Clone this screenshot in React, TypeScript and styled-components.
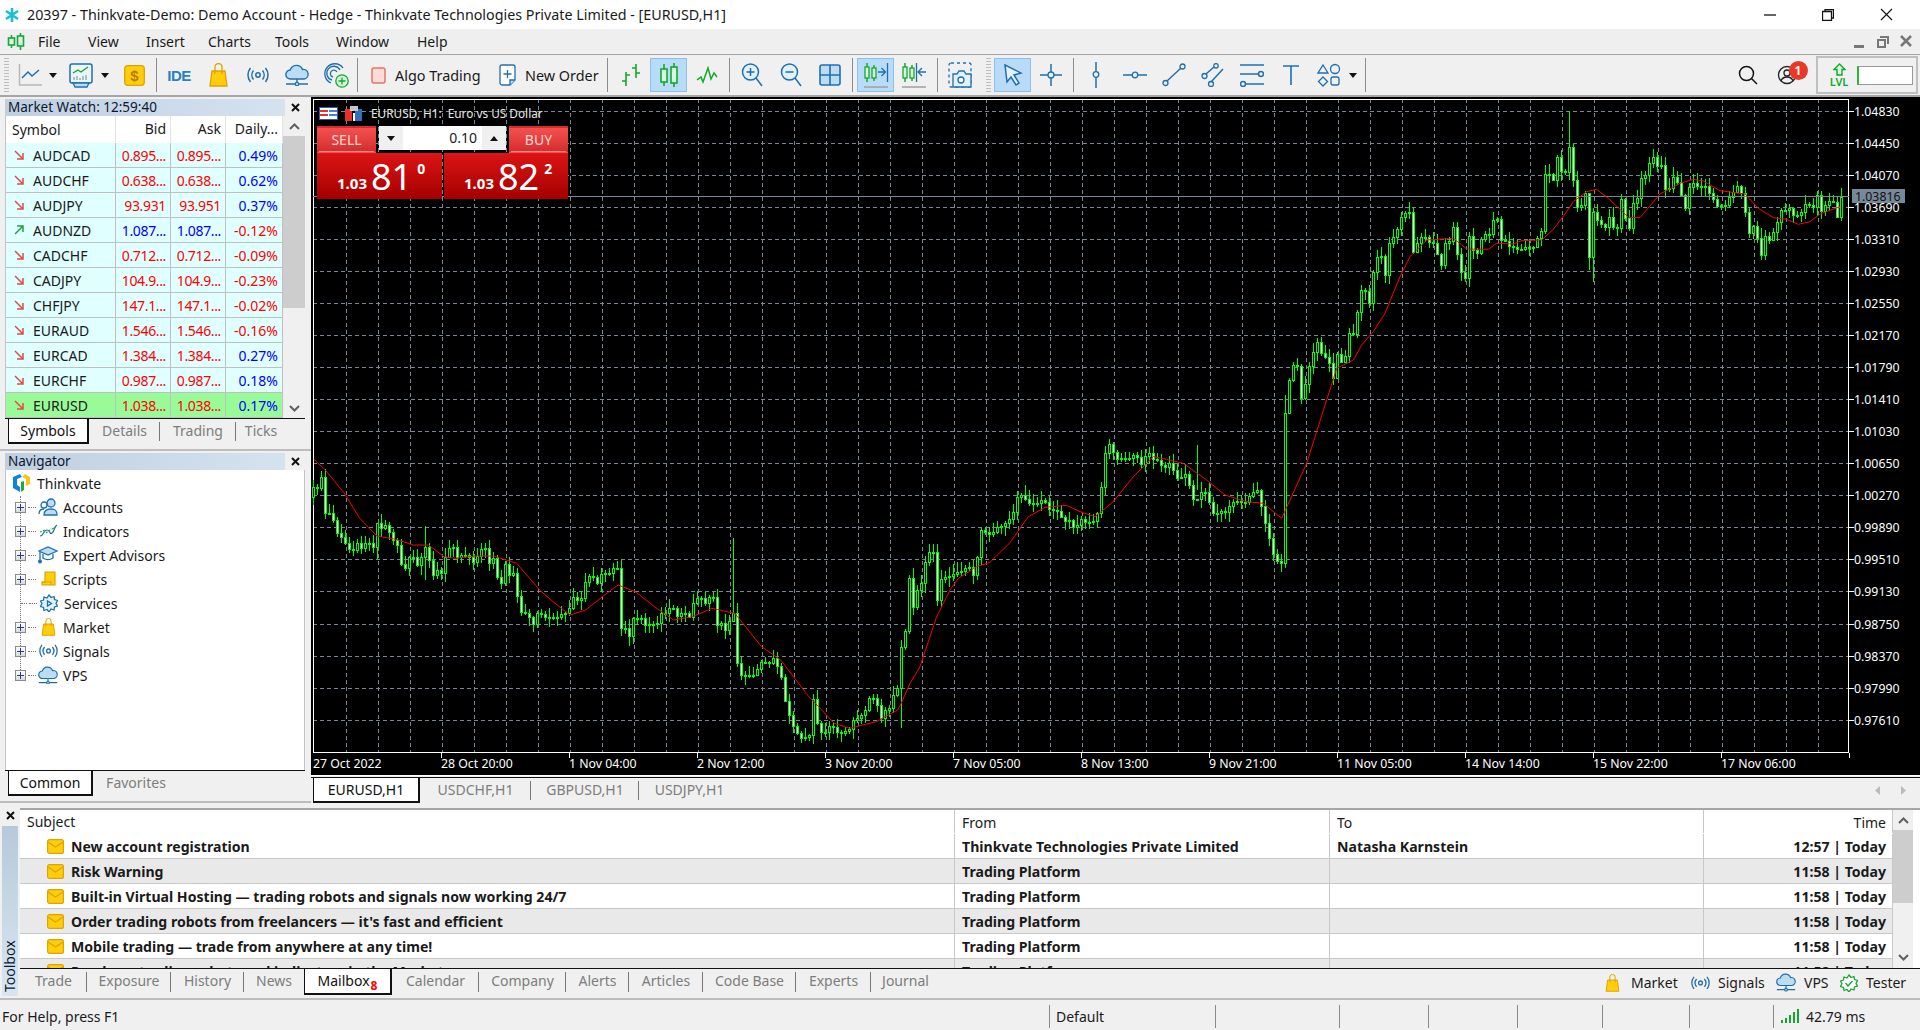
import React from 'react';
import styled, { createGlobalStyle } from 'styled-components';

const BLUE = '#1f6fae';
const LIGHT = '#bcdcf3';
const GREEN = '#12a82e';
const YELLOW = '#ffcd0a';
const AMBER = '#dca400';

const GlobalStyle = createGlobalStyle`
  html, body {
    margin: 0;
    width: 1920px;
    height: 1030px;
    overflow: hidden;
    background: #f0f0f0;
    color: #1a1a1a;
    font-family: "Noto Sans", "Open Sans", sans-serif;
    font-size: 14px;
  }
  * { box-sizing: border-box; }
  svg { display: block; flex: none; }
`;

const Page = styled.div`
  width: 1920px;
  height: 1030px;
  display: flex;
  flex-direction: column;
`;

/* title and menu */
const TitleBar = styled.div`
  height: 29px;
  background: #fff;
  display: flex;
  align-items: center;
  padding: 0 5px 0 4px;
`;
const TitleText = styled.div`
  margin-left: 7px;
  flex: 1;
  font-size: 14.3px;
  white-space: nowrap;
`;
const WindowButton = styled.div`
  width: 58px;
  display: flex;
  justify-content: center;
`;
const MenuBar = styled.div`
  height: 26px;
  background: #efefef;
  border-bottom: 1px solid #a6a6a6;
  display: flex;
  align-items: center;
  padding-left: 7px;
`;
const MenuItem = styled.div<{ $w: number }>`
  width: ${p => p.$w}px;
  font-size: 14px;
`;
const MenuItems = styled.div`
  display: flex;
  margin-left: 13px;
`;
const MdiButtons = styled.div`
  margin-left: auto;
  margin-right: 8px;
  display: flex;
  gap: 10px;
`;

/* toolbar */
const Toolbar = styled.div`
  height: 42px;
  background: #f0f0f0;
  border-bottom: 2px solid #a6a6a6;
  display: flex;
  align-items: center;
  padding-right: 2px;
`;
const Grip = styled.div<{ $w: number }>`
  width: ${p => p.$w}px;
  height: 34px;
  padding-left: ${p => p.$w - 7}px;
  &::before {
    content: '';
    display: block;
    width: 5px;
    height: 100%;
    background: repeating-linear-gradient(#bdbdbd 0 1px, transparent 1px 3px);
    margin-left: -1px;
  }
`;
const Tool = styled.div<{ $w: number; $on?: boolean; $ml?: number }>`
  width: ${p => p.$w}px;
  margin-left: ${p => p.$ml ?? 0}px;
  height: 34px;
  display: flex;
  align-items: center;
  justify-content: center;
  background: ${p => (p.$on ? '#b8dcf7' : 'transparent')};
  box-shadow: ${p => (p.$on ? 'inset 0 0 0 1px #8cc0ea' : 'none')};
`;
const TextTool = styled.div<{ $w: number; $pl: number }>`
  width: ${p => p.$w}px;
  padding-left: ${p => p.$pl}px;
  display: flex;
  align-items: center;
  gap: 9px;
  font-size: 14.4px;
  white-space: nowrap;
`;
const Sep = styled.div<{ $ml?: number }>`
  width: 1px;
  height: 34px;
  margin: 0 3px 0 ${p => p.$ml ?? 3}px;
  background: #8c8c8c;
`;
const Spacer = styled.div`
  flex: 1;
`;
const Caret = styled.div`
  width: 0;
  height: 0;
  border-left: 4.5px solid transparent;
  border-right: 4.5px solid transparent;
  border-top: 5px solid #111;
`;
const IdeLabel = styled.span`
  color: #2c7fc2;
  font-family: "Liberation Sans", sans-serif;
  font-size: 15px;
  font-weight: 700;
  letter-spacing: -0.5px;
`;
const Level = styled.div`
  margin-left: 10px;
  width: 102px;
  height: 38px;
  border: 2px solid #bfbfbf;
  display: flex;
  align-items: center;
  padding-left: 12px;
  gap: 9px;
`;
const LevelIcon = styled.div`
  width: 18px;
  display: flex;
  flex-direction: column;
  align-items: center;
  color: ${GREEN};
  font-size: 11px;
  font-weight: 600;
  line-height: 12px;
`;
const LevelInput = styled.div`
  width: 56px;
  height: 19px;
  background: #fff;
  border: 1px solid #999;
  border-left: 2px solid #28b838;
`;
const UserWrap = styled.div`
  position: relative;
`;
const Badge = styled.div`
  position: absolute;
  left: 12px;
  top: -4px;
  width: 19px;
  height: 19px;
  border-radius: 50%;
  background: #e53a2a;
  color: #fff;
  font-size: 13px;
  font-weight: 600;
  line-height: 19px;
  text-align: center;
`;

/* main area */
const Main = styled.div`
  height: 706px;
  display: flex;
`;
const LeftColumn = styled.div`
  width: 311px;
  flex: none;
  display: flex;
  flex-direction: column;
`;
const Panel = styled.section<{ $h: number }>`
  height: ${p => p.$h}px;
  padding: 2px 6px 0 5px;
  border-bottom: 2px solid #bdbdbd;
  display: flex;
  flex-direction: column;
`;
const PanelHead = styled.div`
  height: 17px;
  display: flex;
  align-items: center;
  flex: none;
`;
const PanelTitle = styled.div`
  flex: 1;
  height: 100%;
  background: linear-gradient(90deg, #bfcfdf, #d5e3f0);
  font-size: 13.5px;
  line-height: 16px;
  padding-left: 3px;
  color: #0a1830;
`;
const PanelClose = styled.div`
  width: 20px;
  display: flex;
  justify-content: center;
`;
const WatchBody = styled.div`
  height: 302px;
  display: flex;
  border-left: 1px solid #c4c4c4;
`;
const WatchTable = styled.div`
  width: 277px;
`;
const WatchRow = styled.div<{ $bg: string; $h: number }>`
  height: ${p => p.$h}px;
  display: grid;
  grid-template-columns: 110px 55px 55px 57px;
  background: ${p => p.$bg};
  border-bottom: 1px solid ${p => (p.$bg === '#fff' ? '#fff' : '#c0c0c0')};
`;
const Cell = styled.div<{ $color?: string; $head?: boolean; $tight?: boolean }>`
  padding-right: 4px;
  text-align: right;
  font-size: 14px;
  letter-spacing: ${p => (p.$tight ? '-0.35px' : '0')};
  line-height: 25px;
  color: ${p => p.$color ?? '#1a1a1a'};
  border-right: 1px solid ${p => (p.$head ? '#e4e4e4' : '#c0c0c0')};
  white-space: nowrap;
  overflow: hidden;
`;
const SymbolCell = styled(Cell)`
  display: flex;
  align-items: center;
  padding-left: ${p => (p.$head ? 6 : 8)}px;
  gap: 9px;
  text-align: left;
`;
const ScrollBar = styled.div<{ $w?: number }>`
  flex: ${p => (p.$w ? 'none' : '1')};
  width: ${p => (p.$w ? `${p.$w}px` : 'auto')};
  background: #f0f0f0;
  position: relative;
  display: flex;
  flex-direction: column;
  align-items: center;
`;
const ScrollEnd = styled.div<{ $h?: number }>`
  height: ${p => p.$h ?? 20}px;
  flex: none;
  display: flex;
  align-items: center;
  justify-content: center;
`;
const ScrollThumb = styled.div<{ $h: number }>`
  width: 100%;
  height: ${p => p.$h}px;
  background: #cdcdcd;
`;
const TabStrip = styled.div<{ $h: number; $pl?: number; $bare?: boolean }>`
  height: ${p => p.$h}px;
  flex: none;
  display: flex;
  align-items: stretch;
  border-top: ${p => (p.$bare ? 'none' : '1px solid #111')};
  padding-left: ${p => p.$pl ?? 3}px;
  background: #f0f0f0;
`;
const Tab = styled.div<{ $w: number; $on?: boolean; $sep?: boolean }>`
  width: ${p => p.$w}px;
  position: relative;
  text-align: center;
  font-size: 14px;
  line-height: 23px;
  white-space: nowrap;
  color: ${p => (p.$on ? '#111' : '#7d7d7d')};
  background: ${p => (p.$on ? '#fff' : 'transparent')};
  border: ${p => (p.$on ? '1px solid #111' : 'none')};
  border-top: none;
  border-width: ${p => (p.$on ? '0 2px 2px 1px' : '0')};
  &::after {
    content: '';
    display: ${p => (p.$sep ? 'block' : 'none')};
    position: absolute;
    right: 0;
    top: 3px;
    bottom: 3px;
    width: 1px;
    background: #777;
  }
`;
const TabCount = styled.b`
  color: #f00;
  font-size: 12px;
  position: relative;
  top: 4px;
  margin-left: 1px;
`;
const TreeBox = styled.div`
  height: 300px;
  background: #fff;
  border-left: 1px solid #c4c4c4;
  border-right: 1px solid #c4c4c4;
  padding-top: 1px;
  position: relative;
  &::before {
    content: '';
    position: absolute;
    left: 14px;
    top: 26px;
    height: 180px;
    border-left: 1px dotted #777;
  }
`;
const TreeRow = styled.div<{ $root?: boolean }>`
  height: 24px;
  display: flex;
  align-items: center;
  font-size: 14px;
  padding-left: ${p => (p.$root ? 6 : 9)}px;
  gap: ${p => (p.$root ? 6 : 0)}px;
`;
const Expander = styled.div`
  width: 11px;
  height: 11px;
  background: linear-gradient(#fff, #d9d9d9);
  border: 1px solid #8a8a8a;
  position: relative;
  z-index: 1;
  &::before, &::after {
    content: '';
    position: absolute;
    background: #243f86;
  }
  &::before { left: 1px; right: 1px; top: 4px; height: 1px; }
  &::after { top: 1px; bottom: 1px; left: 4px; width: 1px; }
`;
const Branch = styled.div<{ $w: number; $ml: number }>`
  width: ${p => p.$w}px;
  margin: 0 2px 0 ${p => p.$ml}px;
  border-top: 1px dotted #777;
`;
const TreeIcon = styled.div`
  width: 20px;
  margin-right: 5px;
  display: flex;
  justify-content: center;
`;

/* chart */
const ChartColumn = styled.div`
  flex: 1;
  display: flex;
  flex-direction: column;
  min-width: 0;
`;
const ChartArea = styled.div`
  height: 679px;
  background: #000;
  position: relative;
  border-bottom: 1px solid #fff;
`;
const TradePanel = styled.div`
  position: absolute;
  left: 6px;
  top: 8px;
  width: 251px;
`;
const TradeHead = styled.div`
  height: 16px;
  margin-bottom: 5px;
  display: flex;
  align-items: center;
  gap: 7px;
  color: #e8e8e8;
  font-size: 11.8px;
  padding-left: 2px;
  white-space: pre;
`;
const TradeRow = styled.div`
  display: flex;
  justify-content: space-between;
`;
const SideButton = styled.div`
  width: 59px;
  height: 27px;
  background: linear-gradient(#f55050, #d42c2c);
  color: #ffd8d8;
  font-size: 14px;
  line-height: 24px;
  text-align: center;
  box-shadow: inset 0 -1px 0 #e98a8a;
  border: 2px solid transparent;
  border-bottom-width: 1px;
`;
const LotBox = styled.div`
  width: 127px;
  height: 24px;
  background: #f0f0f0;
  display: flex;
  align-items: center;
`;
const LotButton = styled.div`
  width: 24px;
  height: 100%;
  display: flex;
  align-items: center;
  justify-content: center;
`;
const LotValue = styled.div`
  flex: 1;
  height: 100%;
  background: #fff;
  text-align: right;
  padding-right: 5px;
  font-size: 14px;
  line-height: 24px;
`;
const UpCaret = styled(Caret)`
  border-top: none;
  border-bottom: 5px solid #111;
`;
const QuoteBox = styled.div<{ $w: number }>`
  width: ${p => p.$w}px;
  height: 46px;
  background: linear-gradient(#dc1414, #a40000);
  color: #fff;
  display: flex;
  align-items: flex-start;
  padding-left: 20px;
`;
const QuoteHandle = styled.b`
  font-size: 15px;
  margin-top: 21px;
  line-height: 18px;
`;
const QuoteBig = styled.span`
  font-size: 36px;
  line-height: 42px;
  margin-left: 4px;
  margin-top: 3px;
`;
const QuotePip = styled.b`
  font-size: 14px;
  line-height: 16px;
  margin-left: 5px;
  margin-top: 8px;
`;
const ChartTabs = styled.div`
  height: 26px;
  display: flex;
  justify-content: space-between;
  border-top: 1px solid #111;
  margin-top: 1px;
  padding-left: 2px;
`;
const TabArrows = styled.div`
  display: flex;
  gap: 21px;
  align-items: center;
  padding-right: 14px;
`;

/* toolbox */
const Toolbox = styled.div`
  height: 197px;
  padding-top: 5px;
  border-bottom: 2px solid #bdbdbd;
  display: flex;
`;
const ToolboxRail = styled.div`
  width: 20px;
  flex: none;
  display: flex;
  flex-direction: column;
  align-items: center;
`;
const RailClose = styled.div`
  height: 18px;
  padding-top: 3px;
`;
const RailTitle = styled.div`
  width: 16px;
  height: 170px;
  background: linear-gradient(#d8e6f2, #b6c9da);
  writing-mode: vertical-rl;
  transform: rotate(180deg);
  font-size: 14px;
  line-height: 16px;
  padding-top: 4px;
  color: #0a1830;
`;
const ToolboxBody = styled.div`
  flex: 1;
  min-width: 0;
  height: 188px;
  display: flex;
  flex-direction: column;
`;
const MailFrame = styled.div`
  height: 160px;
  display: flex;
  background: #fff;
  border-top: 2px solid #a6a6a6;
  overflow: hidden;
`;
const MailTable = styled.div`
  width: 1873px;
  flex: none;
`;
const MailRow = styled.div<{ $alt?: boolean; $head?: boolean }>`
  height: ${p => (p.$head ? 24 : 25)}px;
  display: grid;
  grid-template-columns: 935px 375px 374px 189px;
  background: ${p => (p.$alt ? '#e9e9e9' : '#fff')};
  border-bottom: 1px solid ${p => (p.$head ? '#fff' : '#c8c8c8')};
  font-weight: ${p => (p.$head ? 400 : 700)};
  font-size: ${p => (p.$head ? 14 : 14.1)}px;
  line-height: 25px;
`;
const MailCell = styled.div<{ $right?: boolean }>`
  padding: 0 6px 0 7px;
  border-right: 1px solid #c8c8c8;
  text-align: ${p => (p.$right ? 'right' : 'left')};
  white-space: nowrap;
  overflow: hidden;
`;
const SubjectCell = styled(MailCell)<{ $head?: boolean }>`
  display: flex;
  align-items: center;
  gap: 7px;
  padding-left: ${p => (p.$head ? 7 : 27)}px;
`;
const ToolboxFoot = styled.div`
  height: 28px;
  display: flex;
  justify-content: space-between;
  border-top: 1px solid #111;
`;
const FootLinks = styled.div`
  display: flex;
  align-items: center;
  padding-right: 17px;
  font-size: 14px;
`;
const FootLink = styled.div<{ $w: number }>`
  width: ${p => p.$w}px;
  display: flex;
  align-items: center;
  gap: 8px;
`;
const MarketLink = styled(FootLink)`
  gap: 11px;
`;

/* status */
const StatusBar = styled.div`
  flex: 1;
  display: grid;
  grid-template-columns: 1049px 166px 124px 89px 89px 85px 87px 84px 1fr;
  align-items: center;
  font-size: 14px;
  padding-top: 2px;
`;
const StatusCell = styled.div`
  height: 23px;
  line-height: 23px;
  padding-left: 2px;
  border-left: 1px solid #8a8a8a;
  white-space: nowrap;
  display: flex;
  align-items: center;
  gap: 7px;
  &:first-child { border-left: none; }
`;
const DefaultCell = styled(StatusCell)`
  padding-left: 6px;
`;
const PingCell = styled(StatusCell)`
  padding-left: 7px;
`;

/* toolbar and tree drawings */
const S = (p: React.SVGProps<SVGSVGElement> & { w: number; h?: number }) => {
  const { w, h, children, ...rest } = p;
  const hh = h ?? w;
  return (
    <svg width={w} height={hh} viewBox={`0 0 ${w} ${hh}`} fill="none" stroke={BLUE} strokeWidth={1.3} {...rest}>
      {children}
    </svg>
  );
};

const AppStar = () => (
  <S w={16} h={16} stroke="#18bfd6" strokeWidth={2.6}>
    <path d="M8 1v14M2 4l12 8M14 4L2 12" />
  </S>
);
const CandleLogo = () => (
  <S w={18} h={19} stroke="#19a53a" strokeWidth={1.6}>
    <path d="M4.5 3v13M13.5 1v17" />
    <rect x="1.5" y="6" width="6" height="7" fill="#d6f5dc" />
    <rect x="10.5" y="4" width="6" height="10" fill="#d6f5dc" />
  </S>
);
const LineTool = () => (
  <S w={24} h={22}>
    <path d="M1.5 0v21H24" stroke="#b8b8b8" strokeWidth={1.5} />
    <path d="M4 14l6-6 4 4 7-6" strokeWidth={1.5} />
  </S>
);
const ChartTool = () => (
  <S w={24} h={25}>
    <rect x="1" y="1" width="22" height="19" rx="2" fill="#eaf5fc" strokeWidth={1.5} />
    <path d="M4 10l5-3 3 2 7-5" stroke={GREEN} />
    <path d="M5 17v-3M8 17v-4M11 17v-2M14 17v-4M17 17v-5" stroke="#8aa" />
    <path d="M4 20h16l-2 4H6z" fill={LIGHT} />
  </S>
);
const DollarTool = () => (
  <S w={21} h={21} stroke={AMBER}>
    <rect x="0.7" y="0.7" width="19.6" height="19.6" rx="3" fill={YELLOW} />
    <text x="10.5" y="16" textAnchor="middle" fontSize="15" fontWeight="700" fill="#b87a00" stroke="none" fontFamily="Liberation Sans">$</text>
  </S>
);
const Bag = ({ w = 19, h = 24 }: { w?: number; h?: number }) => (
  <S w={19} h={24} width={w} height={h} viewBox="0 0 19 24" stroke={AMBER}>
    <path d="M3 8h13l2 15H1z" fill={YELLOW} />
    <path d="M6 11V4a3.5 3.5 0 0 1 7 0v7" />
  </S>
);
const SignalIcon = ({ w = 22 }: { w?: number }) => (
  <S w={22} h={16} width={w} height={(w * 16) / 22} viewBox="0 0 22 16" strokeWidth={1.5}>
    <circle cx="11" cy="8" r="2.2" />
    <path d="M6.5 3.5a7 7 0 0 0 0 9M15.5 3.5a7 7 0 0 1 0 9M3.5 1a11 11 0 0 0 0 14M18.5 1a11 11 0 0 1 0 14" />
  </S>
);
const CloudIcon = ({ w = 24 }: { w?: number }) => (
  <S w={24} h={22} width={w} height={(w * 22) / 24} viewBox="0 0 24 22" strokeWidth={1.4}>
    <path d="M5.5 15a4.5 4.5 0 0 1-.3-9A6.5 6.5 0 0 1 17.5 5.5 4.8 4.8 0 0 1 19 15z" fill={LIGHT} />
    <path d="M12 15v4M1 20h22" />
    <circle cx="12" cy="20" r="1.6" fill="#fff" />
  </S>
);
const GlobeTool = () => (
  <S w={26} h={26}>
    <path d="M20 6a10 10 0 1 0-12 15M17 8a7 7 0 1 0-8 10M14 10a3.5 3.5 0 1 0-4 5" />
    <circle cx="19" cy="19" r="6.2" fill="#d6f5dc" stroke={GREEN} />
    <path d="M19 15.5v7M15.5 19h7" stroke={GREEN} />
  </S>
);
const AlgoIcon = () => (
  <S w={15} h={17} stroke="#e2746a" strokeWidth={1.5}>
    <rect x="1" y="1" width="13" height="15" rx="2" fill="#fcdcd6" />
  </S>
);
const OrderIcon = () => (
  <S w={17} h={22}>
    <path d="M3 1h11a2 2 0 0 1 2 2v13l-5 5H3a2 2 0 0 1-2-2V3a2 2 0 0 1 2-2z" fill="#fff" />
    <path d="M16 16h-5v5" fill={LIGHT} />
    <path d="M8.5 6v8M4.5 10h8" />
  </S>
);
const BarsTool = () => (
  <S w={22} h={24} stroke={GREEN} strokeWidth={1.6}>
    <path d="M6 9v14M2 18h4M6 12h4M16 1v14M12 5h4M16 10h4" />
  </S>
);
const CandlesTool = () => (
  <S w={20} h={26} stroke={GREEN} strokeWidth={1.6}>
    <path d="M5 2v22M15 1v24" />
    <rect x="2" y="7" width="6" height="13" fill="#d9f7df" />
    <rect x="12" y="5" width="6" height="16" fill="#d9f7df" />
  </S>
);
const LineGreenTool = () => (
  <S w={22} h={18} stroke={GREEN} strokeWidth={1.5}>
    <path d="M1 14l4-3 2 5 5-14 3 11 3-6 3 4" />
  </S>
);
const ZoomTool = ({ plus }: { plus?: boolean }) => (
  <S w={22} h={26} strokeWidth={1.5}>
    <circle cx="9.5" cy="10" r="8" fill="#e2f1fb" />
    <path d="M15 16l6 8M5.5 10h8" />
    {plus && <path d="M9.5 6v8" />}
  </S>
);
const GridTool = () => (
  <S w={22} h={22} strokeWidth={1.6}>
    <rect x="1" y="1" width="20" height="20" rx="2" fill={LIGHT} />
    <path d="M11 1v20M1 11h20" />
  </S>
);
const ScrollTool = ({ left }: { left?: boolean }) => (
  <S w={26} h={30}>
    <path d="M4 3v19M11 5v16" stroke={GREEN} strokeWidth={1.5} />
    <rect x="2" y="7" width="4" height="11" fill="#d9f7df" stroke={GREEN} />
    <rect x="9" y="8" width="4" height="10" fill="#d9f7df" stroke={GREEN} />
    {left ? <path d="M25 12h-7M21 8l-4 4 4 4M15.500 3v19" /> : <path d="M15 12h7M18.500 8l4 4-4 4M24.500 3v19" />}
    <path d="M1 27h24" stroke="#a0a0a0" strokeWidth={1.5} />
  </S>
);
const CameraTool = () => (
  <S w={24} h={26}>
    <rect x="1" y="1" width="22" height="24" rx="2" strokeDasharray="3 3" />
    <path d="M5 12h4l2-3h5l2 3h5v13H5z" fill="#e2f1fb" stroke={BLUE} />
    <circle cx="13" cy="18" r="3" fill="#fff" />
  </S>
);
const CursorTool = () => (
  <S w={20} h={24} strokeWidth={1.5}>
    <path d="M2 2l16 8-7 2 5 8-3 2-5-8-4 5z" fill="#e2f1fb" />
  </S>
);
const CrossTool = () => (
  <S w={22} h={24}>
    <path d="M11 1v8M11 15v8M0 12h8M14 12h8" strokeWidth={1.5} />
    <circle cx="11" cy="12" r="3" />
  </S>
);
const VLineTool = () => (
  <S w={8} h={28}>
    <path d="M4 1v9M4 17v10" strokeWidth={1.5} />
    <circle cx="4" cy="13.500" r="2.800" />
  </S>
);
const HLineTool = () => (
  <S w={24} h={8}>
    <path d="M0 4h9M15 4h9" strokeWidth={1.5} />
    <circle cx="12" cy="4" r="2.800" />
  </S>
);
const TrendTool = () => (
  <S w={24} h={24}>
    <path d="M5 18L19 5" strokeWidth={1.5} />
    <circle cx="3.500" cy="20" r="2.500" />
    <circle cx="20.500" cy="3.500" r="2.500" />
  </S>
);
const ChannelTool = () => (
  <S w={24} h={24}>
    <path d="M5 11l8-7M10 19l12-13" strokeWidth={1.5} />
    <circle cx="3.500" cy="13" r="2.500" />
    <circle cx="15" cy="2.800" r="2.200" />
    <circle cx="10" cy="21" r="2.500" />
  </S>
);
const LevelsTool = () => (
  <S w={24} h={24} strokeWidth={1.5}>
    <path d="M0 2h24M0 11h18M6 21h18" />
    <circle cx="21" cy="11" r="2.500" />
    <circle cx="3" cy="21" r="2.500" />
  </S>
);
const TextTol = () => (
  <S w={18} h={22} strokeWidth={1.6}>
    <path d="M1 2h16M9 2v19" />
  </S>
);
const ShapesTool = () => (
  <S w={24} h={24}>
    <path d="M6 2l5 8H1z" />
    <circle cx="18" cy="6" r="4.500" />
    <path d="M6 14l4.500 4.500L6 23l-4.500-4.500z" />
    <rect x="14" y="14" width="8" height="8" rx="2" />
  </S>
);
const SearchIcon = () => (
  <S w={20} h={20} stroke="#111" strokeWidth={1.5}>
    <circle cx="8.500" cy="8.500" r="7" />
    <path d="M13.500 13.500L19 19" />
  </S>
);
const UserIcon = () => (
  <S w={20} h={20} stroke="#222" strokeWidth={1.3}>
    <circle cx="10" cy="10" r="8.500" />
    <circle cx="10" cy="8" r="3" />
    <path d="M4 16c1-3 3-4 6-4s5 1 6 4" />
  </S>
);
const LevelArrow = () => (
  <S w={13} h={13} stroke={GREEN} strokeWidth={1.4}>
    <path d="M6.500 1L1 6.500h3V12h5V6.500h3z" fill="#d9f7df" />
  </S>
);
const Cross = ({ size = 9, color = '#111', weight = 2 }: { size?: number; color?: string; weight?: number }) => (
  <S w={size} stroke={color} strokeWidth={weight}>
    <path d={`M1 1L${size - 1} ${size - 1}M${size - 1} 1L1 ${size - 1}`} />
  </S>
);
const Chevron = ({ up }: { up?: boolean }) => (
  <S w={11} h={7} stroke="#606060" strokeWidth={2}>
    <path d={up ? 'M1 6l4.500-4.500L10 6' : 'M1 1l4.500 4.500L10 1'} />
  </S>
);
const ThinkvateLogo = () => (
  <S w={19} h={20} stroke="none">
    <path d="M1 4l7-3 2 3-5 2v6l3 2v5l-7-4z" fill="#0a84dc" />
    <path d="M10 4l3-3 5 3v7l-4 2V6z" fill="#f5c518" />
    <path d="M9 9l3-1v9l-3 2z" fill="#25a83a" />
  </S>
);
const AccountsIcon = () => (
  <S w={20} h={18} strokeWidth={1.3}>
    <circle cx="13" cy="5" r="4" fill={LIGHT} />
    <path d="M6 17c0-5 3-6 7-6s6 1 6 6z" fill={LIGHT} />
    <circle cx="6" cy="7" r="3" fill="#fff" />
    <path d="M1 16c0-4 2-5 5-5" />
  </S>
);
const IndicatorsIcon = () => (
  <S w={19} h={14} strokeWidth={1.2}>
    <path d="M1 12c4 0 3-6 7-6s2 5 5 3 2-7 5-8" />
    <path d="M1 8l5-2M7 9l5-4M13 5l5-3" stroke={GREEN} strokeDasharray="2 1" />
  </S>
);
const EaIcon = () => (
  <S w={20} h={18} strokeWidth={1.3}>
    <path d="M1 5l9-4 9 4-9 4z" fill={LIGHT} />
    <path d="M5 8v4c3 2 7 2 10 0V8M2 6v8" />
    <circle cx="2" cy="15.500" r="1.300" fill={BLUE} />
  </S>
);
const ScriptIcon = () => (
  <S w={15} h={16} stroke={AMBER} strokeWidth={1.2}>
    <path d="M4 1h10v13H1v-3h3z" fill={YELLOW} />
    <path d="M1 11h9v3" />
  </S>
);
const ServiceIcon = () => (
  <S w={18} h={18}>
    <path d="M9 1l2 2.500 3-1 .5 3 3 1-1.500 3 1.500 2.500-3 1-.5 3-3-1L9 18l-2-2.500-3 1-.5-3-3-1L2 9.500.500 7l3-1 .5-3 3 1z" fill="#e2f1fb" />
    <path d="M7.500 7v5l4-2.500z" />
  </S>
);
const MailIcon = () => (
  <S w={17} h={15} stroke={AMBER} strokeWidth={1.2}>
    <rect x="0.600" y="0.600" width="15.800" height="13.800" rx="2" fill={YELLOW} />
    <path d="M1 3l7.500 5L16 3" />
  </S>
);
const TesterIcon = () => (
  <S w={18} h={18} stroke={GREEN}>
    <path d="M9 1l2 2.500 3-1 .5 3 3 1-1.500 3 1.500 2.500-3 1-.5 3-3-1L9 18l-2-2.500-3 1-.5-3-3-1L2 9.500.500 7l3-1 .5-3 3 1z" fill="#fff" />
    <path d="M5.500 9l2.500 3 4.500-5" />
  </S>
);
const TrendArrow = ({ up }: { up?: boolean }) => (
  <S w={10} h={10} stroke={up ? '#22a045' : '#e24a4a'} strokeWidth={1.5}>
    {up ? <path d="M1 9l8-8M3 1h6v6" /> : <path d="M1 1l8 8M9 3v6H3" />}
  </S>
);
const FlagTable = () => (
  <S w={19} h={13} stroke="#2c5ca8" strokeWidth={1}>
    <rect x="0.500" y="0.500" width="18" height="12" fill="#fff" />
    <path d="M1 3h8v2H1zM1 7h8v2H1z" fill="#e53030" stroke="none" />
    <path d="M10 3h8v2h-8zM10 7h8v2h-8zM1 10.500h17" fill="#4a82d0" stroke="none" />
  </S>
);
const FlagBars = () => (
  <S w={19} h={15} stroke="none">
    <rect x="0" y="3" width="7" height="12" fill="#e53030" />
    <rect x="10" y="3" width="7" height="12" fill="#2f6fc0" />
    <rect x="5" y="0" width="8" height="5" fill="#c8c8c8" />
    <rect x="8" y="7" width="2" height="8" fill="#fff" />
  </S>
);
const PingBars = () => (
  <S w={18} h={14} stroke={GREEN} strokeWidth={2}>
    <path d="M1 14v-3M5 14v-5M9 14V6M13 14V3M17 14V0" />
  </S>
);

/* chart data: bar closes read off the picture, four pixels per bar */
const BAR_X0 = 313.3;
const BAR_COUNT = 383;

const closes: number[] = new Array(BAR_COUNT).fill(0);
const setBars = (start: number, values: number[]) => values.forEach((v, i) => { closes[start + i] = v; });

setBars(0, [
  110, 115, 80, 190, 190, 210, 248, 262, 278, 298, 300, 280, 295, 280, 280, 290, 218, 235, 225, 245, 270, 285, 342, 355,
  322, 320, 345, 320, 290, 330, 375, 360, 370, 320, 295, 292, 320, 315, 315, 320, 335, 318, 298, 295, 338, 325, 380, 400,
  342, 375, 368, 437, 485, 488, 500, 522, 490, 492, 500, 505, 502, 500, 492, 490, 475, 440, 450, 445, 395, 378, 380, 400,
  372, 368, 368, 355, 355, 535, 535, 557, 505, 505, 505, 525, 522, 522, 520, 490, 490, 475, 475, 498, 490, 490, 500, 458,
  445, 445, 458, 442, 442, 525, 520, 540, 512, 490, 640, 675, 675, 675, 675, 658, 635, 635, 640, 625, 648, 680, 752, 795,
  828, 850, 865, 862, 855, 748, 818, 845, 845, 828, 830, 845, 848, 842, 838, 810, 805, 795, 780, 745, 745, 765, 805, 780,
  775, 735, 715,
].map(v => 450 + v / 3));
setBars(147, [
  647, 631, 578, 607, 590, 583, 562, 552, 552, 600, 579, 577, 576, 574, 572, 571, 568, 567, 575, 557, 530, 532, 534, 532,
  527, 526, 523, 519, 512, 497, 495, 499, 503, 503, 503, 500, 502, 509, 510, 511, 517, 521, 520, 527, 525, 519, 522, 522,
  521, 513, 487, 453, 444, 452, 459, 458, 458, 458, 455, 457, 464, 456, 453, 459, 460, 465, 467, 463, 470, 478, 477, 474,
  485, 499, 499, 492, 492, 502, 513, 513, 511, 512, 506, 502, 501, 502, 502, 496, 492, 490, 506, 523, 538, 554, 561, 563,
  413,
]);
setBars(244, [
  380, 365, 366, 398, 384, 366, 352, 342, 353, 357, 363, 378, 354, 362, 356, 333, 334, 312, 290, 291, 303, 272, 257, 256,
  275, 243, 237, 229, 217, 213, 212, 252, 243, 237, 237, 242, 243, 254, 265, 243, 241, 227, 254, 272, 278, 236, 250, 253,
  239, 234, 234, 220, 219, 240, 241, 246, 247, 249, 249, 247, 247, 247, 238, 231, 174, 174, 180, 157, 171, 172, 147, 180,
  207, 205, 193, 257, 212, 220, 224, 227, 217, 227, 228, 199, 218, 228, 203, 198,
]);
setBars(332, [
  178, 175, 163, 157, 166, 165, 189, 188, 177, 182, 195, 208, 187, 183, 186, 186, 186, 193, 199, 206, 205, 205, 197, 192,
  186, 193, 212, 233, 226, 238, 255, 236, 240, 232, 222, 210, 210, 208, 215, 215, 212, 204, 205, 207, 195, 211, 205, 201,
  202, 217, 197,
]);

// long shadows that stand out in the picture: [high, low]
const longWicks: Record<number, [number, number]> = {
  105: [538, 620],
  147: [640, 728],
  221: [445, 490],
  243: [395, 568],
  314: [111, 180],
  319: [200, 270],
  320: [208, 282],
  16: [530, 560],
  28: [526, 580],
};

const buildCandles = () => {
  let seed = 7;
  const rand = () => {
    seed = (seed * 16807) % 2147483647;
    return (seed % 1000) / 1000;
  };
  let wicks = '';
  let rising = '';
  let falling = '';
  closes.forEach((close, i) => {
    const open = i === 0 ? close + 10 : closes[i - 1];
    const x = Math.floor(BAR_X0 + i * 4);
    const top = Math.round(Math.min(open, close));
    const bottom = Math.round(Math.max(open, close));
    const long = longWicks[i];
    const high = long ? long[0] : top - 1 - Math.round(rand() * 9);
    const low = long ? long[1] : bottom + 1 + Math.round(rand() * 9);
    wicks += `M${x + 0.5} ${high}V${low}`;
    const rect = `M${x - 0.5} ${top + 0.5}h2v${Math.max(bottom - top, 1)}h-2z`;
    if (close > open) falling += rect;
    else rising += rect;
  });
  return { wicks, rising, falling };
};
const candles = buildCandles();

type Pt = [number, number];
const mapped = (ox: number, oy: number, sx: number, pts: Pt[]) => pts.map(([x, y]) => `${ox + x / sx},${oy + y / 3}`);
const maLine = [
  ...mapped(310, 450, 2.613, [
    [10, 28], [40, 60], [90, 130], [130, 205], [175, 258], [225, 268], [270, 285], [310, 285], [350, 320], [380, 325],
    [430, 318], [480, 318], [540, 340], [600, 420], [640, 460], [680, 495], [720, 480], [770, 435], [805, 405], [850, 425],
    [900, 470], [950, 510], [1000, 500], [1050, 475], [1110, 490], [1180, 590], [1230, 630], [1300, 735], [1370, 820],
    [1410, 835], [1480, 815], [1535, 780],
  ]),
  ...mapped(900, 400, 3, [
    [0, 918], [30, 850], [60, 800], [110, 650], [150, 570], [175, 535], [230, 500], [270, 487], [330, 428], [385, 350],
    [435, 322], [500, 316], [540, 335], [585, 350], [640, 305], [700, 230], [760, 170], [800, 178], [850, 190], [920, 240],
    [975, 285], [1040, 305], [1090, 310], [1145, 355],
  ]),
  ...mapped(1240, 100, 3, [
    [200, 1090], [260, 900], [290, 805], [340, 780], [365, 735], [400, 695], [435, 640], [480, 530], [510, 470], [560, 420],
    [640, 415], [680, 447], [745, 448], [770, 430], [820, 432], [845, 422], [905, 420], [940, 388], [980, 335], [1000, 305],
    [1040, 275], [1070, 268], [1105, 295], [1140, 328], [1165, 352], [1200, 353],
  ]),
  ...mapped(1500, 100, 3, [
    [480, 282], [540, 250], [580, 238], [610, 243], [660, 272], [735, 282], [775, 325], [820, 353], [860, 358], [895, 373],
    [930, 365], [960, 342], [1020, 320],
  ]),
].join(' ');

const priceLabels = [
  '1.04830', '1.04450', '1.04070', '1.03690', '1.03310', '1.02930', '1.02550', '1.02170', '1.01790', '1.01410',
  '1.01030', '1.00650', '1.00270', '0.99890', '0.99510', '0.99130', '0.98750', '0.98370', '0.97990', '0.97610',
];
const priceY = (i: number) => Math.round(110.7 + i * 32.05) + 0.5;
const timeLabels = [
  '27 Oct 2022', '28 Oct 20:00', '1 Nov 04:00', '2 Nov 12:00', '3 Nov 20:00', '7 Nov 05:00', '8 Nov 13:00', '9 Nov 21:00',
  '11 Nov 05:00', '14 Nov 14:00', '15 Nov 22:00', '17 Nov 06:00',
];
const AXIS_X = 1848.5;
const AXIS_BOTTOM = 752.5;
const gridH = priceLabels.map((_, i) => `M313 ${priceY(i)}H${AXIS_X}`).join('');
const gridV = Array.from({ length: 47 }, (_, i) => `M${Math.round(345.6 + i * 32) + 0.5} 99V${AXIS_BOTTOM}`).join('');

const PriceChart = () => (
  <svg width={1609} height={678} viewBox="311 97 1609 678">
    <g shapeRendering="crispEdges">
      <path d={gridH + gridV} stroke="#778899" strokeDasharray="4 3" />
      <path d={`M313.500 ${AXIS_BOTTOM}V99.500H${AXIS_X}V${AXIS_BOTTOM}H313.500`} stroke="#fff" fill="none" />
      {priceLabels.map((_, i) => (
        <path key={i} d={`M${AXIS_X} ${priceY(i)}h5`} stroke="#fff" />
      ))}
      {timeLabels.map((_, i) => (
        <path key={i} d={`M${441.5 + i * 128} ${AXIS_BOTTOM}v5`} stroke="#fff" />
      ))}
      <path d={candles.wicks} stroke="#00ff00" />
      <path d={candles.rising} stroke="#00ff00" fill="#000" />
      <path d={candles.falling} stroke="#00ff00" fill="#fff" />
      <path d={`M313 196.500H${AXIS_X}`} stroke="#778899" />
    </g>
    <polyline points={maLine} fill="none" stroke="#ff0000" strokeWidth={1} />
    <g fill="#fff" fontSize="12.3" fontFamily="Noto Sans">
      {priceLabels.map((p, i) => (
        <text key={p} x={1854} y={priceY(i) + 4.5}>{p}</text>
      ))}
      {timeLabels.map((t, i) => (
        <text key={t} x={313 + i * 128} y={768}>{t}</text>
      ))}
    </g>
    <rect x={1852} y={189} width={53} height={14} fill="#778899" />
    <text x={1855} y={200.500} fill="#111" fontSize="12.3" fontFamily="Noto Sans">1.03816</text>
  </svg>
);

const quotes: [string, boolean, string, string, string, string][] = [
  ['AUDCAD', false, '0.895...', '0.895...', '0.49%', '#00f'],
  ['AUDCHF', false, '0.638...', '0.638...', '0.62%', '#00f'],
  ['AUDJPY', false, '93.931', '93.951', '0.37%', '#00f'],
  ['AUDNZD', true, '1.087...', '1.087...', '-0.12%', '#f00'],
  ['CADCHF', false, '0.712...', '0.712...', '-0.09%', '#f00'],
  ['CADJPY', false, '104.9...', '104.9...', '-0.23%', '#f00'],
  ['CHFJPY', false, '147.1...', '147.1...', '-0.02%', '#f00'],
  ['EURAUD', false, '1.546...', '1.546...', '-0.16%', '#f00'],
  ['EURCAD', false, '1.384...', '1.384...', '0.27%', '#00f'],
  ['EURCHF', false, '0.987...', '0.987...', '0.18%', '#00f'],
  ['EURUSD', false, '1.038...', '1.038...', '0.17%', '#00f'],
];
const bidColor = (up: boolean) => (up ? '#00f' : '#f00');

const navItems: [string, React.ReactNode, boolean][] = [
  ['Accounts', <AccountsIcon />, true],
  ['Indicators', <IndicatorsIcon />, true],
  ['Expert Advisors', <EaIcon />, true],
  ['Scripts', <ScriptIcon />, true],
  ['Services', <ServiceIcon />, false],
  ['Market', <Bag w={15} h={18} />, true],
  ['Signals', <SignalIcon w={19} />, true],
  ['VPS', <CloudIcon w={20} />, true],
];

const mails: [string, string, string, string][] = [
  ['New account registration', 'Thinkvate Technologies Private Limited', 'Natasha Karnstein', '12:57 | Today'],
  ['Risk Warning', 'Trading Platform', '', '11:58 | Today'],
  ['Built-in Virtual Hosting — trading robots and signals now working 24/7', 'Trading Platform', '', '11:58 | Today'],
  ['Order trading robots from freelancers — it\'s fast and efficient', 'Trading Platform', '', '11:58 | Today'],
  ['Mobile trading — trade from anywhere at any time!', 'Trading Platform', '', '11:58 | Today'],
  ['Purchase trading robots and indicators in the Market', 'Trading Platform', '', '11:58 | Today'],
];

const toolboxTabs: [string, number, boolean][] = [
  ['Trade', 67, true], ['Exposure', 84, true], ['History', 73, true], ['News', 60, false], ['Mailbox', 88, false],
  ['Calendar', 87, true], ['Company', 87, true], ['Alerts', 63, true], ['Articles', 74, true], ['Code Base', 93, true],
  ['Experts', 75, true], ['Journal', 69, false],
];

export default function App() {
  return (
    <Page>
      <GlobalStyle />
      <TitleBar>
        <AppStar />
        <TitleText>20397 - Thinkvate-Demo: Demo Account - Hedge - Thinkvate Technologies Private Limited - [EURUSD,H1]</TitleText>
        <WindowButton>
          <S w={12} h={2} stroke="#111"><path d="M0 1h12" /></S>
        </WindowButton>
        <WindowButton>
          <S w={12} h={12} stroke="#111"><path d="M3 2.500V.500h8.500V9H9.500M.500 2.500h9v9h-9z" /></S>
        </WindowButton>
        <WindowButton>
          <Cross size={13} weight={1.1} />
        </WindowButton>
      </TitleBar>

      <MenuBar>
        <CandleLogo />
        <MenuItems>
          <MenuItem $w={50}>File</MenuItem>
          <MenuItem $w={58}>View</MenuItem>
          <MenuItem $w={62}>Insert</MenuItem>
          <MenuItem $w={67}>Charts</MenuItem>
          <MenuItem $w={61}>Tools</MenuItem>
          <MenuItem $w={81}>Window</MenuItem>
          <MenuItem $w={40}>Help</MenuItem>
        </MenuItems>
        <MdiButtons>
          <S w={14} h={13} stroke="#777" strokeWidth={3}><path d="M2 11.500h10" /></S>
          <S w={14} h={13} stroke="#777" strokeWidth={2}><path d="M4 2h8v7M2 5h7v7H2z" /></S>
          <Cross size={12} color="#777" weight={2.5} />
        </MdiButtons>
      </MenuBar>

      <Toolbar>
        <Grip $w={12} />
        <Tool $w={36}><LineTool /></Tool>
        <Tool $w={10}><Caret /></Tool>
        <Tool $w={38} $ml={4}><ChartTool /></Tool>
        <Tool $w={10}><Caret /></Tool>
        <Tool $w={37} $ml={6}><DollarTool /></Tool>
        <Sep />
        <Tool $w={38}><IdeLabel>IDE</IdeLabel></Tool>
        <Tool $w={41}><Bag /></Tool>
        <Tool $w={37}><SignalIcon /></Tool>
        <Tool $w={41}><CloudIcon /></Tool>
        <Tool $w={37}><GlobeTool /></Tool>
        <Sep />
        <TextTool $w={131} $pl={10}><AlgoIcon />Algo Trading</TextTool>
        <TextTool $w={112} $pl={7}><OrderIcon />New Order</TextTool>
        <Sep />
        <Tool $w={39}><BarsTool /></Tool>
        <Tool $w={37} $on><CandlesTool /></Tool>
        <Tool $w={39}><LineGreenTool /></Tool>
        <Sep />
        <Tool $w={38}><ZoomTool plus /></Tool>
        <Tool $w={39}><ZoomTool /></Tool>
        <Tool $w={39}><GridTool /></Tool>
        <Sep />
        <Tool $w={37} $on $ml={1}><ScrollTool /></Tool>
        <Tool $w={40}><ScrollTool left /></Tool>
        <Sep />
        <Tool $w={38}><CameraTool /></Tool>
        <Grip $w={15} />
        <Tool $w={37} $on><CursorTool /></Tool>
        <Tool $w={39}><CrossTool /></Tool>
        <Sep />
        <Tool $w={38}><VLineTool /></Tool>
        <Tool $w={39}><HLineTool /></Tool>
        <Tool $w={39}><TrendTool /></Tool>
        <Tool $w={39}><ChannelTool /></Tool>
        <Tool $w={39}><LevelsTool /></Tool>
        <Tool $w={39}><TextTol /></Tool>
        <Tool $w={38}><ShapesTool /></Tool>
        <Tool $w={10}><Caret /></Tool>
        <Sep $ml={7} />
        <Spacer />
        <Tool $w={39}><SearchIcon /></Tool>
        <Tool $w={39}>
          <UserWrap>
            <UserIcon />
            <Badge>1</Badge>
          </UserWrap>
        </Tool>
        <Level>
          <LevelIcon>
            <LevelArrow />
            LVL
          </LevelIcon>
          <LevelInput />
        </Level>
      </Toolbar>

      <Main>
        <LeftColumn>
          <Panel $h={354}>
            <PanelHead>
              <PanelTitle>Market Watch: 12:59:40</PanelTitle>
              <PanelClose><Cross /></PanelClose>
            </PanelHead>
            <WatchBody>
              <WatchTable>
                <WatchRow $bg="#fff" $h={27}>
                  <SymbolCell $head>Symbol</SymbolCell>
                  <Cell $head>Bid</Cell>
                  <Cell $head>Ask</Cell>
                  <Cell $head>Daily...</Cell>
                </WatchRow>
                {quotes.map(([symbol, up, bid, ask, daily, dailyColor]) => (
                  <WatchRow key={symbol} $bg={symbol === 'EURUSD' ? '#98fb98' : '#e0ffff'} $h={25}>
                    <SymbolCell><TrendArrow up={up} />{symbol}</SymbolCell>
                    <Cell $tight $color={bidColor(up)}>{bid}</Cell>
                    <Cell $tight $color={bidColor(up)}>{ask}</Cell>
                    <Cell $color={dailyColor}>{daily}</Cell>
                  </WatchRow>
                ))}
              </WatchTable>
              <ScrollBar>
                <ScrollEnd><Chevron up /></ScrollEnd>
                <ScrollThumb $h={172} />
                <Spacer />
                <ScrollEnd><Chevron /></ScrollEnd>
              </ScrollBar>
            </WatchBody>
            <TabStrip $h={26}>
              <Tab $w={81} $on>Symbols</Tab>
              <Tab $w={71} $sep>Details</Tab>
              <Tab $w={76} $sep>Trading</Tab>
              <Tab $w={50}>Ticks</Tab>
            </TabStrip>
          </Panel>
          <Panel $h={352}>
            <PanelHead>
              <PanelTitle>Navigator</PanelTitle>
              <PanelClose><Cross /></PanelClose>
            </PanelHead>
            <TreeBox>
              <TreeRow $root><ThinkvateLogo />Thinkvate</TreeRow>
              {navItems.map(([label, icon, expandable]) => (
                <TreeRow key={label}>
                  {expandable ? <Expander /> : <Branch $w={6} $ml={6} />}
                  <Branch $w={8} $ml={expandable ? 2 : 0} />
                  <TreeIcon>{icon}</TreeIcon>
                  {label}
                </TreeRow>
              ))}
            </TreeBox>
            <TabStrip $h={26}>
              <Tab $w={85} $on>Common</Tab>
              <Tab $w={86}>Favorites</Tab>
            </TabStrip>
          </Panel>
        </LeftColumn>

        <ChartColumn>
          <ChartArea>
            <PriceChart />
            <TradePanel>
              <TradeHead>
                <FlagTable />
                <FlagBars />
                {'EURUSD, H1:  Euro vs US Dollar'}
              </TradeHead>
              <TradeRow>
                <SideButton>SELL</SideButton>
                <LotBox>
                  <LotButton><Caret /></LotButton>
                  <LotValue>0.10</LotValue>
                  <LotButton><UpCaret /></LotButton>
                </LotBox>
                <SideButton>BUY</SideButton>
              </TradeRow>
              <TradeRow>
                <QuoteBox $w={125}>
                  <QuoteHandle>1.03</QuoteHandle>
                  <QuoteBig>81</QuoteBig>
                  <QuotePip>0</QuotePip>
                </QuoteBox>
                <QuoteBox $w={124}>
                  <QuoteHandle>1.03</QuoteHandle>
                  <QuoteBig>82</QuoteBig>
                  <QuotePip>2</QuotePip>
                </QuoteBox>
              </TradeRow>
            </TradePanel>
          </ChartArea>
          <ChartTabs>
            <TabStrip $h={25} $pl={0} $bare>
              <Tab $w={107} $on>EURUSD,H1</Tab>
              <Tab $w={111} $sep>USDCHF,H1</Tab>
              <Tab $w={108} $sep>GBPUSD,H1</Tab>
              <Tab $w={101}>USDJPY,H1</Tab>
            </TabStrip>
            <TabArrows>
              <S w={5} h={9} stroke="none" fill="#bbb"><path d="M5 0v9L0 4.500z" /></S>
              <S w={5} h={9} stroke="none" fill="#bbb"><path d="M0 0v9l5-4.500z" /></S>
            </TabArrows>
          </ChartTabs>
        </ChartColumn>
      </Main>

      <Toolbox>
        <ToolboxRail>
          <RailClose><Cross /></RailClose>
          <RailTitle>Toolbox</RailTitle>
        </ToolboxRail>
        <ToolboxBody>
          <MailFrame>
            <MailTable>
              <MailRow $head>
                <SubjectCell $head>Subject</SubjectCell>
                <MailCell>From</MailCell>
                <MailCell>To</MailCell>
                <MailCell $right>Time</MailCell>
              </MailRow>
              {mails.map(([subject, from, to, time], i) => (
                <MailRow key={subject} $alt={i % 2 === 1}>
                  <SubjectCell><MailIcon />{subject}</SubjectCell>
                  <MailCell>{from}</MailCell>
                  <MailCell>{to}</MailCell>
                  <MailCell $right>{time}</MailCell>
                </MailRow>
              ))}
            </MailTable>
            <ScrollBar $w={20}>
              <ScrollEnd><Chevron up /></ScrollEnd>
              <ScrollThumb $h={73} />
              <Spacer />
              <ScrollEnd $h={22}><Chevron /></ScrollEnd>
            </ScrollBar>
          </MailFrame>
          <ToolboxFoot>
            <TabStrip $h={26} $pl={0} $bare>
              {toolboxTabs.map(([label, w, sep]) => (
                <Tab key={label} $w={w} $sep={sep} $on={label === 'Mailbox'}>
                  {label}
                  {label === 'Mailbox' && <TabCount>8</TabCount>}
                </Tab>
              ))}
            </TabStrip>
            <FootLinks>
              <MarketLink $w={86}><Bag w={15} h={18} />Market</MarketLink>
              <FootLink $w={85}><SignalIcon w={19} />Signals</FootLink>
              <FootLink $w={64}><CloudIcon w={20} />VPS</FootLink>
              <FootLink $w={63}><TesterIcon />Tester</FootLink>
            </FootLinks>
          </ToolboxFoot>
        </ToolboxBody>
      </Toolbox>

      <StatusBar>
        <StatusCell>For Help, press F1</StatusCell>
        <DefaultCell>Default</DefaultCell>
        <StatusCell />
        <StatusCell />
        <StatusCell />
        <StatusCell />
        <StatusCell />
        <StatusCell />
        <PingCell><PingBars />42.79 ms</PingCell>
      </StatusBar>
    </Page>
  );
}
